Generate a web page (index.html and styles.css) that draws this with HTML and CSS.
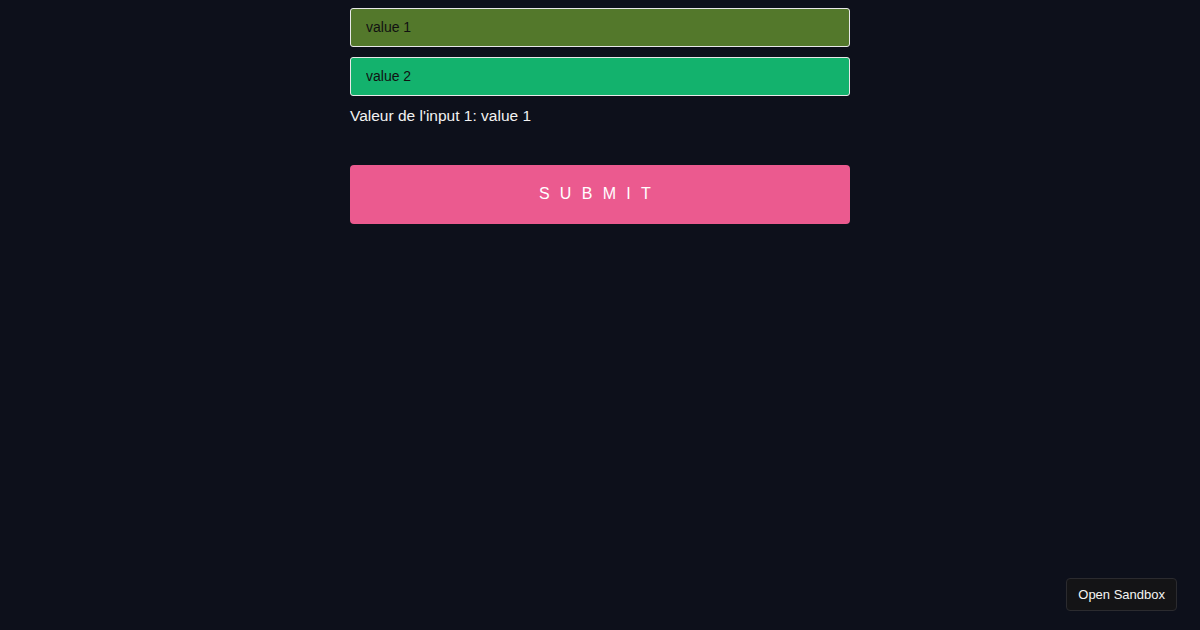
FILE: index.html
```html
<!DOCTYPE html>
<html lang="fr">
<head>
<meta charset="utf-8">
<title>Form</title>
<link rel="stylesheet" href="styles.css">
</head>
<body>
<main class="form">
  <input class="field field-one" type="text" value="value 1">
  <input class="field field-two" type="text" value="value 2">
  <p class="echo">Valeur de l'input 1: value 1</p>
  <button class="submit" type="button">SUBMIT</button>
</main>
<a class="sandbox" href="#">Open Sandbox</a>
</body>
</html>
```
FILE: styles.css
```css
html, body {
  margin: 0;
  padding: 0;
  background: #0d101b;
  height: 100%;
}
body {
  font-family: "Liberation Sans", Arial, sans-serif;
  color: #f0f0f0;
}
.form {
  width: 500px;
  margin: 0 auto;
  padding-top: 8px;
  display: flex;
  flex-direction: column;
}
.field {
  box-sizing: border-box;
  width: 100%;
  height: 39px;
  border: 1px solid #e8e8e8;
  border-radius: 3px;
  padding: 0 15px 1px;
  font-family: "Liberation Sans", Arial, sans-serif;
  font-size: 14px;
  color: #111;
  outline: none;
}
.field-one { background: #53782b; }
.field-two { background: #13b26d; margin-top: 10px; }
.echo {
  margin: 10px 0 0;
  font-size: 15.5px;
  line-height: 20px;
  color: #f2f2f2;
}
.submit {
  margin-top: 39px;
  height: 59px;
  border: none;
  border-radius: 4px;
  background: #eb5a8f;
  color: #fff;
  font-family: "Liberation Sans", Arial, sans-serif;
  font-size: 16px;
  letter-spacing: 10.3px;
  padding: 0 0 2px 0;
  cursor: pointer;
}
.sandbox {
  position: fixed;
  right: 23px;
  bottom: 19px;
  box-sizing: border-box;
  height: 33px;
  padding: 0 11px;
  display: flex;
  align-items: center;
  background: #141416;
  border: 1px solid #2b2b2f;
  border-radius: 4px;
  color: #f4f4f4;
  font-size: 13px;
  text-decoration: none;
}
```
